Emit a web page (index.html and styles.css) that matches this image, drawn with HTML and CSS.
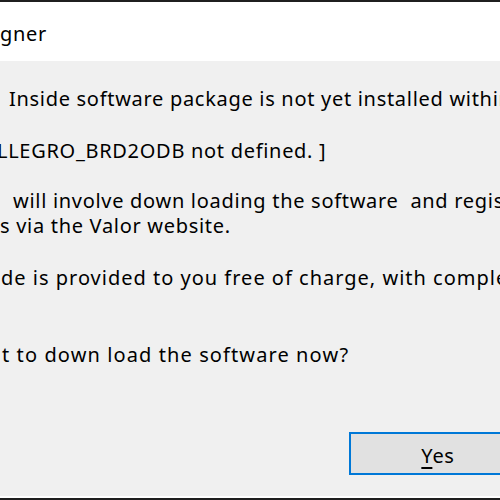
FILE: index.html
```html
<!DOCTYPE html>
<html lang="en">
<head>
    <meta charset="UTF-8">
    <title>Designer</title>
    <link rel="stylesheet" href="styles.css">
</head>
<body>
    <div id="dialog">
        <div id="titlebar">
            <span id="title">gner</span>
        </div>
        <div id="content">
            <p class="line l1">Inside software package is not yet installed within</p>
            <p class="line l2">LLEGRO_BRD2ODB not defined. ]</p>
            <p class="line l3">will involve down loading the software  and register</p>
            <p class="line l4">s via the Valor website.</p>
            <p class="line l5">de is provided to you free of charge, with complete</p>
            <p class="line l6">t to down load the software now?</p>
        </div>
        <div id="buttons">
            <button id="yes"><u>Y</u>es</button>
        </div>
    </div>
</body>
</html>
```

FILE: styles.css
```css
:root {
    --frame: #1f1f1f;
    --titlebg: #fff;
    --bodybg: #f0f0f0;
    --text: #000;
    --btnbg: #e1e1e1;
    --focus: #0078d7;
}
* {
    margin: 0;
    padding: 0;
    box-sizing: border-box;
    font-family: 'Noto Sans', 'Open Sans', sans-serif;
}
body {
    width: 500px;
    height: 500px;
    overflow: hidden;
    background-color: var(--frame);
}
#dialog {
    height: 500px;
    display: flex;
    flex-direction: column;
    border-top: 2px solid var(--frame);
    border-bottom: 2px solid var(--frame);
}
#titlebar {
    height: 59px;
    background-color: var(--titlebg);
    display: flex;
    align-items: center;
    padding-top: 4px;
}
#title {
    font-size: 20px;
    letter-spacing: 0.7px;
    color: var(--text);
}
#content {
    flex: 1;
    background-color: var(--bodybg);
    padding-top: 25px;
    color: var(--text);
}
.line {
    font-size: 20px;
    letter-spacing: 0.7px;
    line-height: 25px;
    white-space: pre;
}
.l1 {
    margin-left: 9px;
}
.l2 {
    margin-top: 27px;
    margin-left: -3px;
}
.l3 {
    margin-top: 25px;
    margin-left: 13px;
}
.l4 {
    margin-left: 0;
}
.l5 {
    margin-top: 27px;
    margin-left: 1px;
    letter-spacing: 1px;
}
.l6 {
    margin-top: 52px;
    margin-left: 2px;
    letter-spacing: 1.1px;
}
#buttons {
    background-color: var(--bodybg);
    height: 81px;
    padding: 15px 0 0 349px;
    border-bottom: 2px solid var(--titlebg);
}
#yes {
    width: 178px;
    height: 43px;
    padding-top: 4px;
    font-size: 20px;
    letter-spacing: 0.7px;
    color: var(--text);
    background-color: var(--btnbg);
    border: 2px solid var(--focus);
}
#yes u {
    text-underline-offset: 4px;
}
```
